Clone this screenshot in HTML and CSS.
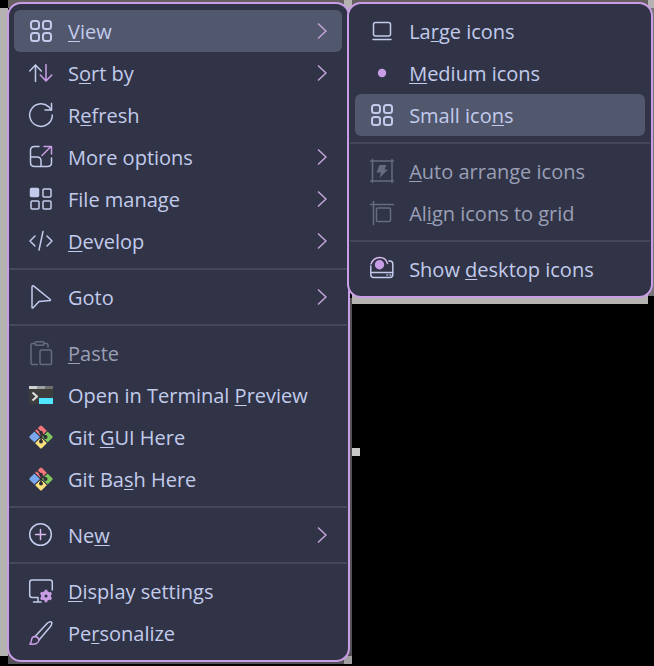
FILE: index.html
```html
<!DOCTYPE html>
<html lang="en">
<head>
<meta charset="utf-8">
<meta name="viewport" content="width=device-width, initial-scale=1">
<title>Desktop menu</title>
<link rel="stylesheet" href="styles.css">
</head>
<body>
<svg class="defs" aria-hidden="true">
  <symbol id="grid" viewBox="0 0 24 24"><rect x="2" y="2" width="8" height="8" rx="2.5"/><rect x="14" y="2" width="8" height="8" rx="2.5"/><rect x="2" y="14" width="8" height="8" rx="2.5"/><rect x="14" y="14" width="8" height="8" rx="2.5"/></symbol>
  <symbol id="chevron" viewBox="0 0 10 18"><path d="M1 1.500 9 9 1 16.500"/></symbol>
  <symbol id="git" viewBox="0 0 24 24">
    <g stroke="none">
      <path fill="#f0767c" d="M6 6 11 1q1-1 2 0l5 5-6 6z"/>
      <path fill="#7ba7ee" d="M5.500 6.500 11 12l-5.500 5.500L.8 13q-1-1 0-2z"/>
      <path fill="#80c65a" d="M18.500 6.500 23.200 11q1 1 0 2l-4.700 4.500L13 12z"/>
      <path fill="#fbe07e" d="M6 18 12 12l6 6-5 5q-1 1-2 0z"/>
    </g>
    <path stroke="#303446" stroke-width="1" d="m5.500 6 13 12M18.500 6l-13 12"/>
    <path stroke="#2b2e35" stroke-width="1.500" d="M8 3.500 12 7.500v9M12 8l5 4"/>
    <g fill="#2b2e35" stroke="none"><circle cx="12" cy="7.500" r="1.800"/><circle cx="12" cy="16.500" r="2"/><circle cx="16.500" cy="12" r="2"/></g>
  </symbol>
</svg>
<main class="menus">
  <div class="menu main-menu" role="menu" aria-label="Desktop">
    <button class="item active" role="menuitem"><svg class="icon bold"><use href="#grid"/></svg><span class="label"><u>V</u>iew</span><svg class="chevron"><use href="#chevron"/></svg></button>
    <button class="item" role="menuitem"><svg class="icon" viewBox="0 0 24 24"><path d="M6.500 20.500V4M.7 10l5.800-6 5.800 6"/><path class="accent" d="M17 3.500V20M11.300 14l5.700 6 5.800-6"/></svg><span class="label">S<u>o</u>rt by</span><svg class="chevron"><use href="#chevron"/></svg></button>
    <button class="item" role="menuitem"><svg class="icon" viewBox="0 0 24 24"><path d="M23.300 12A11.300 11.300 0 1 1 19.500 3.600L22.500 7"/><path d="M22.500.5V7H16"/></svg><span class="label">R<u>e</u>fresh</span></button>
    <button class="item" role="menuitem"><svg class="icon" viewBox="0 0 24 24"><path d="M10 1.500H5.500Q1.500 1.500 1.500 5.500v12q0 4 4 4h13q4 0 4-4V13M1.500 12H8q4 0 4 4v5.500"/><path class="accent" d="m13 10.500 9-9M15 1.500h7.500V9"/></svg><span class="label">More options</span><svg class="chevron"><use href="#chevron"/></svg></button>
    <button class="item" role="menuitem"><svg class="icon" viewBox="0 0 24 24"><rect class="solid" x="1.500" y="1.500" width="8" height="8" rx="1"/><rect x="14" y="2" width="8" height="8" rx="1"/><rect x="2" y="14" width="8" height="8" rx="1"/><rect x="14" y="14" width="8" height="8" rx="1"/></svg><span class="label">File manage</span><svg class="chevron"><use href="#chevron"/></svg></button>
    <button class="item" role="menuitem"><svg class="icon" viewBox="0 0 24 24"><path d="m6 7-5 5 5 5M18 7l5 5-5 5M14 2.500l-4 18.500"/></svg><span class="label"><u>D</u>evelop</span><svg class="chevron"><use href="#chevron"/></svg></button>
    <hr>
    <button class="item" role="menuitem"><svg class="icon" viewBox="0 0 24 24"><path d="M3 2v20.500q.3 1 1.200.2L10 16.500l11-1q1-.4.300-1L4.500.9Q3.200.4 3 2z"/></svg><span class="label">Goto</span><svg class="chevron"><use href="#chevron"/></svg></button>
    <hr>
    <button class="item" role="menuitem" disabled><svg class="icon" viewBox="0 0 24 24"><path d="M6 2.500H3.500Q2 2.500 2 4v18q0 1.500 1.500 1.500h5M15 2.500h2.500Q19 2.500 19 4v2"/><rect x="6" y=".8" width="9" height="3.500" rx="1.500"/><rect x="11" y="9" width="11.500" height="14.500" rx="1.500"/></svg><span class="label"><u>P</u>aste</span></button>
    <button class="item" role="menuitem"><svg class="icon" viewBox="0 0 24 24"><g stroke="none"><path fill="#3d3d3d" d="M0 3h24v18H0z"/><path fill="#d0d0d0" d="M0 3h8v3H0z"/><path fill="#a0a0a0" d="M8 3h8v3H8z"/><path fill="#707070" d="M16 3h8v3h-8z"/><path fill="#50e6ff" d="M10 15h14v6H10z"/></g><path stroke="#ddd" stroke-width="2.200" stroke-linecap="butt" d="m3.500 9.500 4.500 4-4.500 4"/></svg><span class="label">Open in Terminal <u>P</u>review</span></button>
    <button class="item" role="menuitem"><svg class="icon"><use href="#git"/></svg><span class="label">Git <u>G</u>UI Here</span></button>
    <button class="item" role="menuitem"><svg class="icon"><use href="#git"/></svg><span class="label">Git Ba<u>s</u>h Here</span></button>
    <hr>
    <button class="item" role="menuitem"><svg class="icon" viewBox="0 0 24 24"><circle cx="11.500" cy="11.500" r="10.800"/><path class="accent-light" d="M11.500 6.500v10M6.500 11.500h10"/></svg><span class="label">Ne<u>w</u></span><svg class="chevron"><use href="#chevron"/></svg></button>
    <hr>
    <button class="item" role="menuitem"><svg class="icon" viewBox="0 0 24 24"><path d="M23.300 11V3.500q0-2.500-2.500-2.500H3.200Q.7 1 .7 3.500v12.500q0 2.500 2.500 2.500H9V23M4.500 23H12"/><circle cx="17" cy="17" r="3.300" fill="none" stroke="#ca9ee6" stroke-width="3.400"/><path stroke="#ca9ee6" stroke-width="2.600" stroke-linecap="butt" d="M17 10.800v2M17 21.200v2M11.600 13.900l1.800 1M20.600 19l1.800 1M11.600 20.100l1.800-1M20.600 15l1.800-1"/></svg><span class="label"><u>D</u>isplay settings</span></button>
    <button class="item" role="menuitem"><svg class="icon" viewBox="0 0 24 24"><path d="M6 15.500 18.500 2q2.500-2 4-1 1 1.500-1 4.500L10 19"/><path class="accent" d="M.8 23q1.700-1.500 1.700-4 .5-3.500 3.500-3.500 3.500.5 4 3.500-.5 5-9.200 4z"/></svg><span class="label">Pe<u>r</u>sonalize</span></button>
  </div>
  <div class="menu sub-menu" role="menu" aria-label="View">
    <button class="item" role="menuitemradio" aria-checked="false"><svg class="icon" viewBox="0 0 24 24"><rect x="3.500" y="3.500" width="17" height="13.500" rx="2"/><path d="M3 20.500h18"/></svg><span class="label">La<u>r</u>ge icons</span></button>
    <button class="item" role="menuitemradio" aria-checked="true"><svg class="icon" viewBox="0 0 24 24"><circle class="accent-solid" cx="12" cy="12" r="4.200"/></svg><span class="label"><u>M</u>edium icons</span></button>
    <button class="item active" role="menuitemradio" aria-checked="false"><svg class="icon bold"><use href="#grid"/></svg><span class="label">Small ico<u>n</u>s</span></button>
    <hr>
    <button class="item" role="menuitemcheckbox" aria-checked="false" disabled><svg class="icon" viewBox="0 0 24 24"><path d="M.5 2h23M.5 22h23M2.500.5v23M22 .5v23"/><path class="solid" stroke="none" d="M9.500 6h7l-2 4.500H18L9.500 19l1.500-5.500H6.500z"/></svg><span class="label"><u>A</u>uto arrange icons</span></button>
    <button class="item" role="menuitemcheckbox" aria-checked="false" disabled><svg class="icon" viewBox="0 0 24 24"><path d="M.5 3.500h23M3.500.5v23"/><rect x="6.500" y="7" width="14" height="13.500" rx="1"/></svg><span class="label">Al<u>i</u>gn icons to grid</span></button>
    <hr>
    <button class="item" role="menuitemcheckbox" aria-checked="true"><svg class="icon" viewBox="0 0 24 24"><path d="M.8 9v8.500q0 3 3 3h16q3 0 3-3V7q0-3-3-3h-1M1 15.500h22M17 18h.5M20 18h.5"/><path class="accent-light" d="M1 7Q3.500.8 9.500.6T17.500 6.500"/><circle class="accent-solid" cx="9.500" cy="7.800" r="4.700"/></svg><span class="label">Show <u>d</u>esktop icons</span></button>
  </div>
</main>
</body>
</html>
```
FILE: styles.css
```css
* {
  box-sizing: border-box;
}

:root {
  --base: #303446;
  --surface: #51576d;
  --line: #434759;
  --text: #c3cbec;
  --muted: #9a9fb6;
  --mauve: #ca9ee6;
}

body {
  margin: 0;
  min-height: 100vh;
  font: 20px/28px "Open Sans", "Noto Sans", sans-serif;
  color: var(--text);
  /* wallpaper fragments visible around the menus */
  background:
    linear-gradient(#b5b3b2, #b5b3b2) 344px 0 / 8px 12px no-repeat,
    linear-gradient(#b5b3b2, #b5b3b2) 100% 0 / 6px 8px no-repeat,
    linear-gradient(#b5b3b2, #b5b3b2) 0 8px / 8px 648px no-repeat,
    linear-gradient(#655f60, #655f60) 8px 0 / 100% 8px no-repeat,
    linear-gradient(#b5b3b2, #b5b3b2) 352px 290px / 296px 14px no-repeat,
    linear-gradient(#777477, #777477) 100% 8px / 6px 288px no-repeat,
    linear-gradient(#c8c8c8, #c8c8c8) 352px 448px / 8px 8px no-repeat,
    linear-gradient(#a09ea0, #a09ea0) 344px 656px / 8px 8px no-repeat,
    linear-gradient(#555158, #555158) 8px 298px / 344px 366px no-repeat,
    #000;
}

.defs {
  position: absolute;
  width: 0;
  height: 0;
}

.menus {
  display: flex;
  align-items: flex-start;
  padding: 2px 1px 2px 7px;
}

.menu {
  padding: 6px;
  border: 2px solid var(--mauve);
  border-radius: 14px;
  background: var(--base);
}

.main-menu {
  flex: 343;
  padding-left: 5px;
}

.sub-menu {
  flex: 303;
  margin-left: -3px;
}

.item {
  display: flex;
  align-items: center;
  gap: 15px;
  width: 100%;
  height: 42px;
  padding: 0 15px;
  border: 0;
  border-radius: 6px;
  background: none;
  color: inherit;
  font: inherit;
  text-align: left;
}

.item.active {
  background: var(--surface);
}

.item:disabled {
  color: var(--muted);
}

.label {
  flex: 1;
  padding-top: 2px;
  white-space: nowrap;
}

.label u {
  text-decoration-thickness: 1px;
  text-underline-offset: 2px;
  text-decoration-skip-ink: none;
}

hr {
  height: 2px;
  margin: 6px -5px;
  border: 0;
  background: var(--line);
}

.icon {
  flex: none;
  width: 24px;
  height: 24px;
  overflow: visible;
  fill: none;
  stroke: var(--text);
  stroke-width: 1.5;
  stroke-linecap: round;
  stroke-linejoin: round;
}

.icon.bold {
  stroke-width: 2;
}

.item:disabled .icon {
  stroke: #666b80;
}

.icon .accent {
  stroke: var(--mauve);
}

.icon .accent-light {
  stroke: #d8b8ec;
}

.icon .solid {
  fill: var(--text);
}

.item:disabled .solid {
  fill: #666b80;
}

.icon .accent-solid {
  fill: var(--mauve);
  stroke: none;
}

.chevron {
  flex: none;
  width: 10px;
  height: 18px;
  fill: none;
  stroke: #c5a5da;
  stroke-width: 1.5;
}
```
